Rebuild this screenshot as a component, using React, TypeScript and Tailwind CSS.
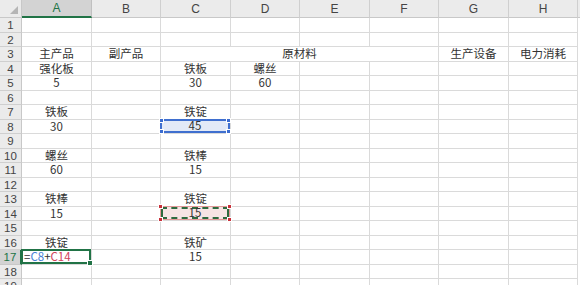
import React from "react";

const COLS = ["A", "B", "C", "D", "E", "F", "G", "H"];
const COL_W = ["w-[70px]", "w-[69px]", "w-[70px]", "w-[69px]", "w-[70px]", "w-[69px]", "w-[70px]", "w-[69px]"];
const ROW_H = [
  "h-[15px]", "h-[14px]", "h-[15px]", "h-[14px]", "h-[15px]", "h-[14px]", "h-[15px]", "h-[14px]",
  "h-[15px]", "h-[14px]", "h-[15px]", "h-[14px]", "h-[15px]", "h-[14px]", "h-[15px]", "h-[14px]",
  "h-[15px]", "h-[14px]", "h-[15px]",
];

const DATA: Record<string, string> = {
  "3,0": "主产品",
  "3,1": "副产品",
  "3,6": "生产设备",
  "3,7": "电力消耗",
  "4,0": "强化板",
  "4,2": "铁板",
  "4,3": "螺丝",
  "5,0": "5",
  "5,2": "30",
  "5,3": "60",
  "7,0": "铁板",
  "7,2": "铁锭",
  "8,0": "30",
  "10,0": "螺丝",
  "10,2": "铁棒",
  "11,0": "60",
  "11,2": "15",
  "13,0": "铁棒",
  "13,2": "铁锭",
  "14,0": "15",
  "16,0": "铁锭",
  "16,2": "铁矿",
  "17,2": "15",
};

function Handle({ pos, color }: { pos: string; color: string }) {
  return <div className={`absolute w-[5px] h-[5px] ${pos} ${color} border border-white`} />;
}

function Cell({ r, c }: { r: number; c: number }) {
  const base = `relative shrink-0 ${COL_W[c]} border-r border-b border-[#dadada] flex items-center justify-center text-[11.5px] leading-none text-[#333]`;
  if (r === 8 && c === 2) {
    return (
      <div className={base}>
        <div className="absolute -left-px -top-px right-0 bottom-0 bg-[#e3eaf7] border-2 border-[#3f6fcf] z-10 flex items-center justify-center">
          <span>45</span>
          <Handle pos="-left-[3px] -top-[3px]" color="bg-[#3b6cd0]" />
          <Handle pos="-right-[3px] -top-[3px]" color="bg-[#3b6cd0]" />
          <Handle pos="-left-[3px] -bottom-[3px]" color="bg-[#3b6cd0]" />
          <Handle pos="-right-[3px] -bottom-[3px]" color="bg-[#3b6cd0]" />
        </div>
      </div>
    );
  }
  if (r === 14 && c === 2) {
    return (
      <div className={base}>
        <div className="absolute -left-px -top-px right-0 bottom-0 bg-[#f7e4e4] border border-[#e39a9a] z-10">
          <div className="absolute inset-0 border-2 border-dashed border-[#2e6b3f] flex items-center justify-center">
            <span>15</span>
          </div>
          <Handle pos="-left-[3px] -top-[3px]" color="bg-[#c9303a]" />
          <Handle pos="-right-[3px] -top-[3px]" color="bg-[#c9303a]" />
          <Handle pos="-left-[3px] -bottom-[3px]" color="bg-[#c9303a]" />
          <Handle pos="-right-[3px] -bottom-[3px]" color="bg-[#c9303a]" />
        </div>
      </div>
    );
  }
  if (r === 17 && c === 0) {
    return (
      <div className={base}>
        <div className="absolute -left-px -top-px right-0 bottom-0 bg-white border-2 border-[#217346] z-10 flex items-center pl-px text-[11.5px]">
          <span className="text-[#333]">=</span>
          <span className="text-[#4a7fd6]">C8</span>
          <span className="text-[#333]">+</span>
          <span className="text-[#d2435a]">C14</span>
          <div className="absolute -right-[4px] -bottom-[4px] w-[6px] h-[6px] bg-[#217346] border border-white" />
        </div>
      </div>
    );
  }
  const v = DATA[`${r},${c}`];
  return <div className={base}>{v ?? ""}</div>;
}

const HEAD_FONT = { fontFamily: '"Liberation Sans", Arial, sans-serif' };

function Row({ r }: { r: number }) {
  const selected = r === 17;
  return (
    <div className={`flex ${ROW_H[r - 1]}`}>
      <div
        style={HEAD_FONT}
        className={`shrink-0 w-[22px] border-b flex items-center justify-center text-[11.5px] leading-[12px] ${
          selected
            ? "bg-[#d3d3d3] text-[#217346] border-r-2 border-r-[#217346] border-b-[#c8c8c8]"
            : "bg-[#ebebeb] text-[#444] border-r border-r-[#c8c8c8] border-b-[#cfcfcf]"
        }`}
      >
        {r}
      </div>
      {r === 3 ? (
        <>
          <Cell r={3} c={0} />
          <Cell r={3} c={1} />
          <div className="shrink-0 w-[278px] border-r border-b border-[#dadada] flex items-center justify-center text-[11.5px] leading-none text-[#333]">
            原材料
          </div>
          <Cell r={3} c={6} />
          <Cell r={3} c={7} />
        </>
      ) : (
        COLS.map((_, c) => <Cell key={c} r={r} c={c} />)
      )}
    </div>
  );
}

export default function App() {
  const rows = Array.from({ length: 19 }, (_, i) => i + 1);
  return (
    <div
      className="w-[580px] h-[285px] overflow-hidden bg-white"
      style={{ fontFamily: '"Noto Sans CJK SC", "Noto Sans", sans-serif' }}
    >
      <div className="flex h-[18px] bg-[#f3f3f3]">
        <div className="relative shrink-0 w-[22px] bg-[#ebebeb] border-r border-b border-[#c8c8c8]">
          <div className="absolute right-[3px] bottom-[3px] w-0 h-0 border-l-[8px] border-l-transparent border-b-[8px] border-b-[#b5b5b5]" />
        </div>
        {COLS.map((l, i) => (
          <div
            key={l}
            style={HEAD_FONT}
            className={`shrink-0 ${COL_W[i]} flex items-end justify-center text-[12px] leading-[12px] border-r ${
              i === 0
                ? "bg-[#d3d3d3] text-[#217346] border-b-2 border-b-[#217346] border-r-[#c0c0c0]"
                : "bg-[#ebebeb] text-[#444] border-b border-b-[#c8c8c8] border-r-[#cfcfcf]"
            }`}
          >
            <span className="mb-[2px]">{l}</span>
          </div>
        ))}
        <div className="flex-1 bg-[#ebebeb] border-b border-[#c8c8c8]" />
      </div>
      {rows.map((r) => (
        <Row key={r} r={r} />
      ))}
    </div>
  );
}
